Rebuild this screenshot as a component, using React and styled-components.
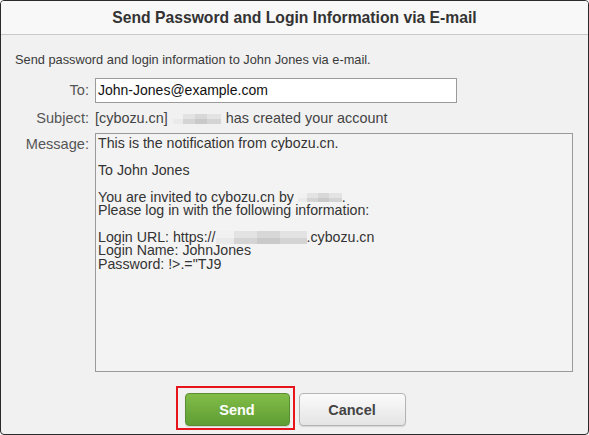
import React from "react";
import styled, { createGlobalStyle } from "styled-components";

const GlobalStyle = createGlobalStyle`
  html, body {
    margin: 0;
    padding: 0;
    background: #ffffff;
  }
  * {
    box-sizing: border-box;
  }
`;

const Dialog = styled.div`
  width: 589px;
  height: 435px;
  display: flex;
  flex-direction: column;
  border: 1px solid #2a2a2a;
  border-radius: 4px;
  overflow: hidden;
  background: #f1f1f1;
  font-family: "Liberation Sans", Arial, sans-serif;
  color: #333;
`;

const TitleBar = styled.div`
  height: 34px;
  flex: none;
  display: flex;
  align-items: center;
  justify-content: center;
  background: #f8f8f8;
  border-bottom: 1px solid #c9c9c9;
  font-size: 15.7px;
  font-weight: bold;
  color: #333;
`;

const Body = styled.div`
  flex: 1;
  display: flex;
  flex-direction: column;
  padding: 17px 14px 0 14px;
`;

const Intro = styled.div`
  font-size: 12.8px;
  line-height: 16px;
  margin-bottom: 10px;
  color: #3a3a3a;
`;

const Form = styled.div`
  display: grid;
  grid-template-columns: 74px 1fr;
  column-gap: 6px;
  row-gap: 5px;
`;

const Label = styled.div`
  text-align: right;
  font-size: 14.6px;
  line-height: ${(p) => p.$lh || "20px"};
  padding-top: ${(p) => p.$top || "0"};
  color: #555;
  white-space: nowrap;
`;

const Value = styled.div`
  font-size: 14.4px;
  line-height: 20px;
  color: #444;
`;

const Input = styled.div`
  width: 362px;
  height: 25px;
  background: #fff;
  border: 1px solid #9a9a9a;
  padding: 0 2px;
  font-size: 14px;
  line-height: 23px;
  color: #111;
`;

const MessageBox = styled.div`
  height: 239px;
  margin-right: 1px;
  border: 1px solid #9a9a9a;
  background: #f3f3f3;
  padding: 3px 2px;
  font-size: 14.2px;
  line-height: 13.4px;
  color: #333;
  white-space: pre-wrap;
`;

const Blur = styled.span`
  display: inline-block;
  vertical-align: ${(p) => p.$va || "-1px"};
  width: ${(p) => p.$w}px;
  height: ${(p) => p.$h || 10}px;
  margin: 0 ${(p) => p.$m || 0}px;
  background:
    linear-gradient(90deg, rgba(255,255,255,0.5) 0 20%, transparent 20% 45%, rgba(0,0,0,0.05) 45% 70%, transparent 70%),
    linear-gradient(180deg, #e3e3e3 0 50%, #d4d4d4 50%);
`;

const Footer = styled.div`
  display: flex;
  justify-content: center;
  gap: 9px;
  padding: 21px 0 0 1px;
`;

const Highlight = styled.span`
  position: relative;
  display: inline-flex;
  &::after {
    content: "";
    position: absolute;
    left: -9px;
    right: -5px;
    top: -7px;
    bottom: -4px;
    border: 2px solid #e8141b;
    pointer-events: none;
  }
`;

const Button = styled.button`
  width: ${(p) => p.$w}px;
  height: 33px;
  border-radius: 4px;
  font-family: inherit;
  font-size: 14.5px;
  font-weight: bold;
  cursor: pointer;
  color: ${(p) => (p.$primary ? "#fff" : "#444")};
  border: 1px solid ${(p) => (p.$primary ? "#5b8e33" : "#b4b4b4")};
  background: ${(p) =>
    p.$primary
      ? "linear-gradient(180deg, #82bd48 0%, #5f9d34 100%)"
      : "linear-gradient(180deg, #fbfbfb 0%, #e4e4e4 100%)"};
  box-shadow: 0 1px 1px rgba(0, 0, 0, 0.12);
`;

export default function App() {
  return (
    <>
      <GlobalStyle />
      <Dialog>
        <TitleBar>Send Password and Login Information via E-mail</TitleBar>
        <Body>
          <Intro>Send password and login information to John Jones via e-mail.</Intro>
          <Form>
            <Label $lh="25px">To:</Label>
            <Input>John-Jones@example.com</Input>
            <Label>Subject:</Label>
            <Value>
              [cybozu.cn]
              <Blur $w={48} $m={5} />
              has created your account
            </Value>
            <Label $top="1px">Message:</Label>
            <MessageBox>
              {"This is the notification from cybozu.cn.\n\nTo John Jones\n\nYou are invited to cybozu.cn by "}
              <Blur $w={44} $h={9} $va="0px" />
              {".\nPlease log in with the following information:\n\nLogin URL: https://"}
              <Blur $w={91} $h={13} $va="-2px" />
              {".cybozu.cn\nLogin Name: JohnJones\nPassword: !>.=\"TJ9"}
            </MessageBox>
          </Form>
          <Footer>
            <Highlight>
              <Button $primary $w={105}>Send</Button>
            </Highlight>
            <Button $w={107}>Cancel</Button>
          </Footer>
        </Body>
      </Dialog>
    </>
  );
}
